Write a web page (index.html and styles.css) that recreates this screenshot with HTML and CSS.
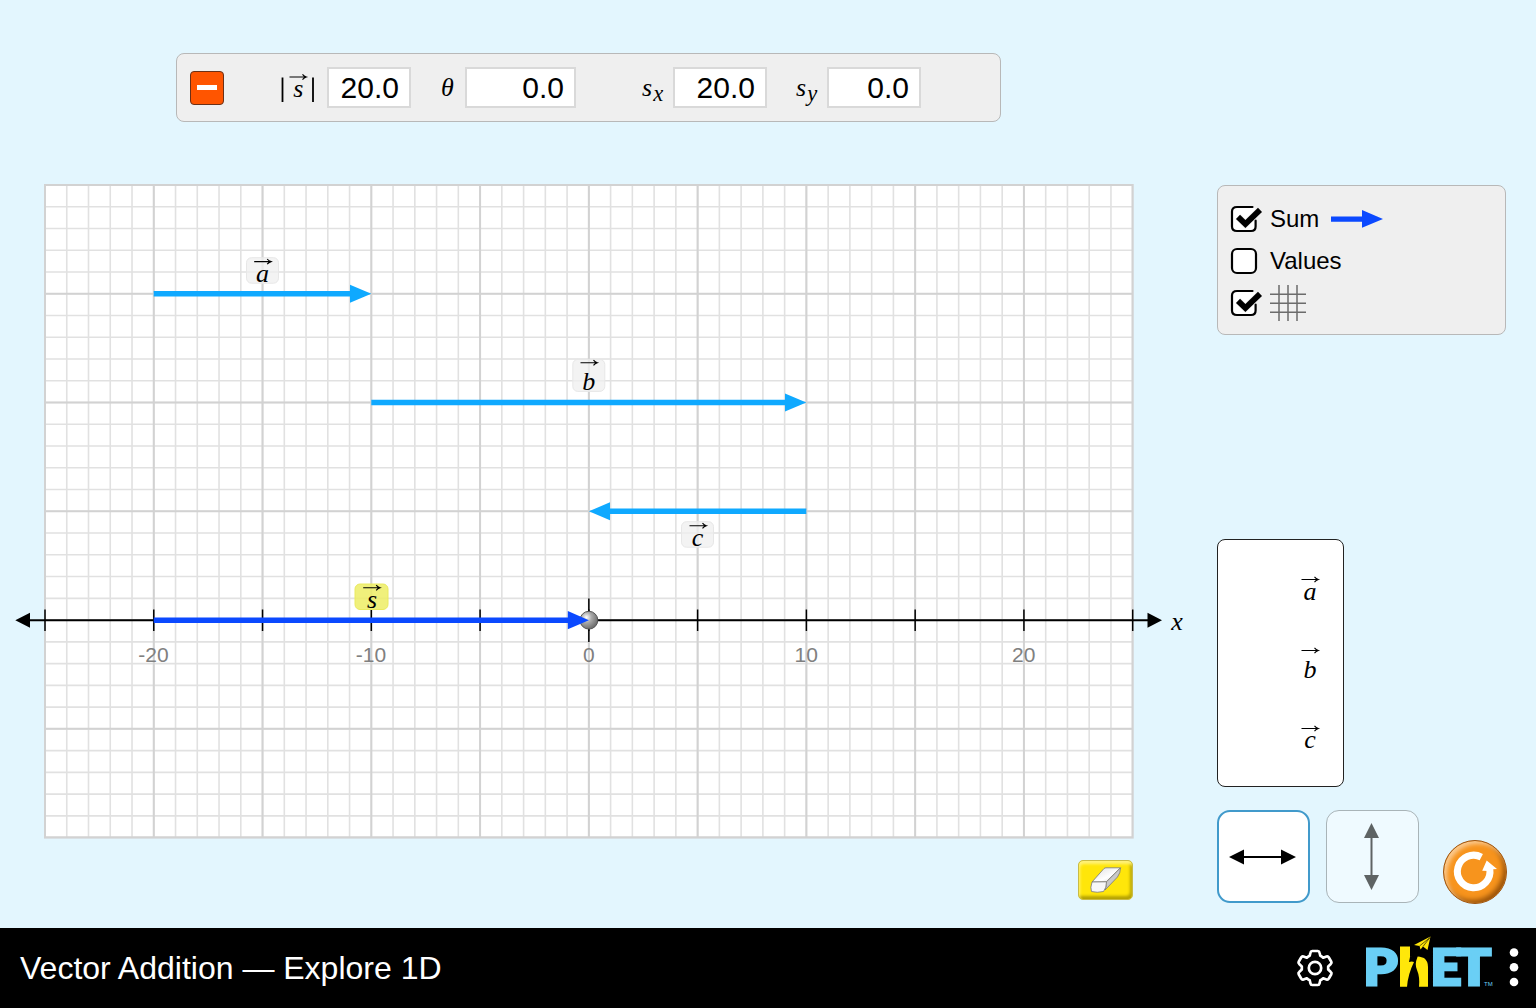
FILE: index.html
```html
<!DOCTYPE html>
<html lang="en">
<head>
<meta charset="utf-8">
<title>Vector Addition</title>
<link rel="stylesheet" href="styles.css">
</head>
<body>
<svg width="0" height="0" class="defs">
  <defs>
    <path id="over" d="M-8.500 0H8M4.500 -2.600Q6 -.7 8.300 0Q6 .7 4.500 2.600" fill="none" stroke="#000" stroke-width="1.100"/>
    <radialGradient id="ball" cx=".36" cy=".34" r=".65"><stop offset="0" stop-color="#fff"/><stop offset=".45" stop-color="#aaa"/><stop offset="1" stop-color="#707070"/></radialGradient>
    <linearGradient id="rubber" x1="0" y1="0" x2="1" y2="1"><stop offset="0" stop-color="#ddd"/><stop offset=".6" stop-color="#fff"/><stop offset="1" stop-color="#ccc"/></linearGradient>
    <g id="checked">
      <rect x="2" y="3" width="24" height="24" rx="4.500" fill="#fff"/>
      <path d="M25.600 16.500V22.500Q25.600 27 21 27H7Q2 27 2 22.500V7.500Q2 3 7 3H22.500" fill="none" stroke="#000" stroke-width="2.200" stroke-linecap="round"/>
      <path d="M8 12.800L15.400 20L30 5.800" fill="none" stroke="#efefef" stroke-width="7"/>
      <path d="M8 12.800L15.400 20L30 5.800" fill="none" stroke="#000" stroke-width="5.800"/>
    </g>
  </defs>
</svg>
<main class="sim">
  <section class="left">
    <div class="readout">
      <button class="collapse" aria-label="Collapse"><span></span></button>
      <svg class="mag" width="46" height="40"><path d="M7.500 9.500V34M38 9.500V34" stroke="#000" stroke-width="1.800"/><text class="math" x="23.300" y="29" text-anchor="middle">s</text><use href="#over" x="23" y="9"/></svg>
      <output class="field f1">20.0</output>
      <i class="math theta">θ</i>
      <output class="field f2">0.0</output>
      <i class="math comp c1">s<small>x</small></i>
      <output class="field f3">20.0</output>
      <i class="math comp c2">s<small>y</small></i>
      <output class="field f3">0.0</output>
    </div>
    <svg class="graph" width="1200" height="656" viewBox="0 183 1200 656">
      <rect x="45" y="185" width="1087.700" height="652.600" fill="#fff"/>
      <path d="M45 511.300H1133" stroke="#e1e1e1" stroke-width="652.600" stroke-dasharray="1.6 20.154" stroke-dashoffset=".8"/>
      <path d="M588.850 185V838" stroke="#e1e1e1" stroke-width="1087.700" stroke-dasharray="1.6 20.154" stroke-dashoffset=".8"/>
      <path d="M45 511.300H1133" stroke="#d2d2d2" stroke-width="652.600" stroke-dasharray="2 106.77" stroke-dashoffset="1"/>
      <path d="M588.850 185V838" stroke="#d2d2d2" stroke-width="1087.700" stroke-dasharray="2 106.77" stroke-dashoffset="1"/>
      <rect x="45" y="185" width="1087.700" height="652.600" fill="none" stroke="#d2d2d2" stroke-width="2"/>
      <path d="M28 620.200H1150" stroke="#000" stroke-width="2"/>
      <path d="M15.300 620.200L30 612.700V627.700ZM1162 620.200L1147.500 612.700V627.700Z"/>
      <path d="M44.250 620.200H1134" stroke="#000" stroke-width="21.500" stroke-dasharray="1.5 107.27"/>
      <path d="M588.850 598.500V642" stroke="#000" stroke-width="1.500"/>
      <g class="scale" text-anchor="middle"><text x="153.500" y="662">-20</text><text x="371" y="662">-10</text><text x="588.800" y="662">0</text><text x="806.300" y="662">10</text><text x="1023.800" y="662">20</text></g>
      <text class="math" x="1177" y="629.500" text-anchor="middle">x</text>
      <circle cx="588.900" cy="620.200" r="8.900" fill="url(#ball)" stroke="#555" stroke-width="1"/>
      <g class="tag"><rect x="246.500" y="257.700" width="32" height="25.500" rx="5"/><rect x="572.800" y="359.400" width="32" height="32" rx="5"/><rect x="681.500" y="521.700" width="32" height="25.500" rx="5"/></g>
      <rect x="355" y="584" width="33" height="25.500" rx="5" fill="#eded64" fill-opacity=".85" stroke="#eaea60"/>
      <g class="math" text-anchor="middle"><text x="262.500" y="281.700">a</text><text x="588.800" y="389.700">b</text><text x="697.500" y="545.500">c</text><text x="372" y="607.700">s</text></g>
      <use href="#over" x="262.700" y="261.600"/><use href="#over" x="589" y="362.700"/><use href="#over" x="698" y="525.700"/><use href="#over" x="371.700" y="587.700"/>
      <g fill="#0fa9ff"><path d="M153.700 291H350V284.800L371.300 293.800L350 302.800V296.600H153.700Z"/><path d="M371.300 399.700H785V393.500L806.300 402.500L785 411.500V405.300H371.300Z"/><path d="M806.300 508.500H610V502.300L588.900 511.300L610 520.300V514.100H806.300Z"/></g>
      <path fill="#0b49ff" d="M153.700 617.400H567.800V611.100L588.900 620.200L567.800 629.200V623H153.700Z"/>
    </svg>
    <button class="eraser" aria-label="Erase"><svg width="55" height="40" stroke="#777" stroke-width=".8" stroke-linejoin="round"><path d="M14 22L26 8.500Q27 7.800 28 7.800H42.500L28.500 21.800Z" fill="url(#rubber)"/><path d="M28.500 21.800L42.500 7.800Q42.500 13 39.500 17L27 30Q28.500 26 28.500 21.800Z" fill="#c8c8c8"/><path d="M14 22L28.500 21.800Q28.500 28 25.500 31.500Q19 33 13.500 31.500Q12 28 14 22Z" fill="#f7f7f7"/></svg></button>
  </section>
  <aside class="right">
    <div class="options">
      <div class="opt"><svg width="33" height="30"><use href="#checked"/></svg><span>Sum</span><svg width="54" height="20"><path d="M0 7.500H31V1L52 10L31 18.800V12.800H0Z" fill="#0b49ff"/></svg></div>
      <div class="opt"><svg width="33" height="30"><rect x="2" y="3" width="24" height="24" rx="5" fill="#fff" stroke="#000" stroke-width="2.200"/></svg><span>Values</span></div>
      <div class="opt"><svg width="33" height="30"><use href="#checked"/></svg><svg class="gridicon" width="36" height="36"><path d="M9 0V36M18 0V36M27 0V36M0 9.200H36M0 18.200H36M0 27.200H36" stroke="#6b6b6b" stroke-width="1.500"/></svg></div>
    </div>
    <div class="toolbox">
      <svg width="30" height="40"><use href="#over" x="15" y="7.500"/><text class="math" x="15" y="27.500" text-anchor="middle">a</text></svg>
      <svg width="30" height="40"><use href="#over" x="15" y="7.500"/><text class="math" x="15" y="34.500" text-anchor="middle">b</text></svg>
      <svg width="30" height="40"><use href="#over" x="15" y="7.500"/><text class="math" x="15" y="27.200" text-anchor="middle">c</text></svg>
    </div>
    <div class="controls">
      <button class="dir selected" aria-label="Horizontal"><svg width="68" height="68"><path d="M10 34H58" stroke="#000" stroke-width="2"/><path d="M0 34L15 26.500V41.500ZM67 34L52 26.500V41.500Z"/></svg></button>
      <button class="dir" aria-label="Vertical"><svg width="68" height="68" fill="#5e6364"><path d="M33.500 10V58" stroke="#5e6364" stroke-width="2"/><path d="M33.500 0L26 15H41ZM33.500 67L26 52H41Z"/></svg></button>
      <button class="reset" aria-label="Reset all"><svg width="64" height="64"><path d="M38.300 17.100A16.300 16.300 0 1 0 46.800 29" fill="none" stroke="#fff" stroke-width="7"/><path d="M39.200 30.800L43.700 20.500L54 29L50 29.300L46 31Z" fill="#fff"/></svg></button>
    </div>
  </aside>
</main>
<footer class="navbar">
  <h1>Vector Addition — Explore 1D</h1>
  <svg class="gear" width="38" height="38" viewBox="-19 -19 38 38" fill="none" stroke="#fff" stroke-width="2.700" stroke-linejoin="round"><circle r="6.200"/><path d="M-2.800 -17H2.800Q4.200 -17 4.500 -15.500L5.300 -12.200Q7 -11.500 8.200 -10.300L11.500 -11.500Q13 -12 13.700 -10.700L16.300 -6.300Q17 -5 15.800 -4L13.200 -1.600V1.600L15.800 4Q17 5 16.300 6.300L13.700 10.700Q13 12 11.500 11.500L8.200 10.300Q7 11.500 5.300 12.200L4.500 15.500Q4.200 17 2.800 17H-2.800Q-4.200 17 -4.500 15.500L-5.300 12.200Q-7 11.500 -8.200 10.300L-11.500 11.500Q-13 12 -13.700 10.700L-16.300 6.300Q-17 5 -15.800 4L-13.200 1.600V-1.600L-15.800 -4Q-17 -5 -16.300 -6.300L-13.700 -10.700Q-13 -12 -11.500 -11.500L-8.200 -10.300Q-7 -11.500 -5.300 -12.200L-4.500 -15.500Q-4.200 -17 -2.800 -17Z"/></svg>
  <svg class="logo" width="132" height="56" viewBox="1364 934 132 56">
    <g class="letters"><text x="1363.500" y="985" textLength="34" lengthAdjust="spacingAndGlyphs">P</text><text x="1430.500" y="985" textLength="31" lengthAdjust="spacingAndGlyphs">E</text><text x="1457" y="985" textLength="34" lengthAdjust="spacingAndGlyphs">T</text></g>
    <path d="M1400 946.500H1410V957Q1417 955 1424 958Q1428 961 1428 967V986.700H1400Z" fill="#ffe70a"/>
    <path d="M1410 957L1419 952L1417 958.500Q1414.500 964 1417 970Q1420 977 1419 987H1407Q1408 974 1414 962Q1412 961 1409 962Z" fill="#000"/>
    <path d="M1414 945L1430.500 936.500L1427.500 950L1423 946.500L1420.500 949.500L1419.500 946Z" fill="#ffe70a"/><path d="M1419.500 946L1430 937.500L1423 946.500" fill="none" stroke="#000" stroke-width=".6"/>
    <text class="tm" x="1484" y="986">TM</text>
  </svg>
  <svg class="dots" width="10" height="40" fill="#fff"><circle cx="5" cy="4.500" r="4.300"/><circle cx="5" cy="19.300" r="4.300"/><circle cx="5" cy="34" r="4.300"/></svg>
</footer>
</body>
</html>
```
FILE: styles.css
```css
* { box-sizing: border-box; }
body { margin: 0; width: 1536px; height: 1008px; overflow: hidden; font-family: "Liberation Sans", Arial, sans-serif; color: #000; display: flex; flex-direction: column; }
svg { display: block; flex: none; overflow: visible; }
.defs { position: absolute; }
button { padding: 0; margin: 0; flex: none; }
.sim { height: 928px; display: flex; background: #e3f6fe; }
.left { width: 1216.500px; flex: none; display: flex; flex-direction: column; padding-top: 53px; }
.math { font-family: "Liberation Serif", "Times New Roman", serif; font-style: italic; font-size: 26px; }
.readout { width: 825px; height: 69px; margin-left: 176px; border: 1px solid #b8b8b8; border-radius: 8px; background: #efefef; display: flex; align-items: center; padding-left: 13px; flex: none; }
.collapse { width: 34px; height: 34px; border: 1px solid #6b3017; border-radius: 4px; background: #ff5500; display: flex; align-items: center; justify-content: center; }
.collapse span { width: 20px; height: 5px; background: #fff; }
.mag { margin-left: 51px; }
.field { height: 41px; border: 2px solid #d9d9d9; background: #fff; font-size: 30px; line-height: 37px; text-align: right; padding-right: 10px; flex: none; }
.f1 { width: 84px; margin-left: 6px; }
.f2 { width: 111px; margin-left: 10px; }
.f3 { width: 94px; }
.theta { width: 14px; margin-left: 30px; }
.comp { line-height: 30px; width: 31px; }
.comp small { font-size: 22.500px; line-height: 1; position: relative; top: 5px; left: 1px; }
.c1 { margin-left: 66px; }
.c2 { margin-left: 29px; }
.graph { margin-top: 61px; }
.scale { font-size: 21px; fill: #808080; }
.tag rect { fill: #efefef; fill-opacity: .75; stroke: #e7e7e7; }
.eraser { width: 55px; height: 40px; margin: 21px 0 0 1078px; border: 1px solid #c9bb45; border-radius: 5px; background: #ffe60a; box-shadow: inset 1px 3px 3px #fff27a, inset -2px -3px 3px #b4a104; display: flex; align-items: center; justify-content: center; }
.right { width: 290px; padding-top: 185px; display: flex; flex-direction: column; }
.options { width: 289px; height: 150px; border: 1px solid #b8b8b8; border-radius: 8px; background: #efefef; padding: 11.500px 0 0 12.500px; font-size: 24px; display: flex; flex-direction: column; }
.opt { display: flex; align-items: center; height: 42px; }
.opt span { margin: 1px 12px 0 7px; }
.gridicon { margin-left: 7px; }
.toolbox { width: 127px; height: 248px; margin-top: 204px; border: 1px solid #222; border-radius: 8px; background: #fff; display: flex; flex-direction: column; align-items: flex-end; padding: 32px 17.500px 0 0; gap: 31px; }
.toolbox svg:last-child { margin-top: 7px; }
.controls { margin-top: 23px; display: flex; align-items: flex-end; }
.dir { width: 93px; height: 93px; border: 1px solid #a9b4b8; border-radius: 13px; background: #effaff; display: flex; align-items: center; justify-content: center; margin-right: 16px; }
.dir.selected { border: 2px solid #419acb; background: #fff; }
.reset { width: 64px; height: 64px; margin-left: 8px; border: 1px solid #9e5510; border-radius: 50%; background: #f7941d; box-shadow: inset 3px 3px 4px #fbc98e, inset -3px -3px 5px #9b540a; display: flex; align-items: center; justify-content: center; }
.controls .reset { margin-bottom: -1px; }
.navbar { height: 80px; background: #000; color: #fff; display: flex; align-items: center; padding-left: 20px; }
.navbar h1 { margin: 0; font-size: 32px; font-weight: 400; width: 1276px; flex: none; }
.logo { margin: -12px 0 0 30px; }
.letters { font-family: Lato, sans-serif; font-weight: 900; font-size: 50px; fill: #6acff5; stroke: #6acff5; stroke-width: 3; }
.tm { font-size: 6px; fill: #6acff5; }
.dots { margin-left: 13px; }
```
